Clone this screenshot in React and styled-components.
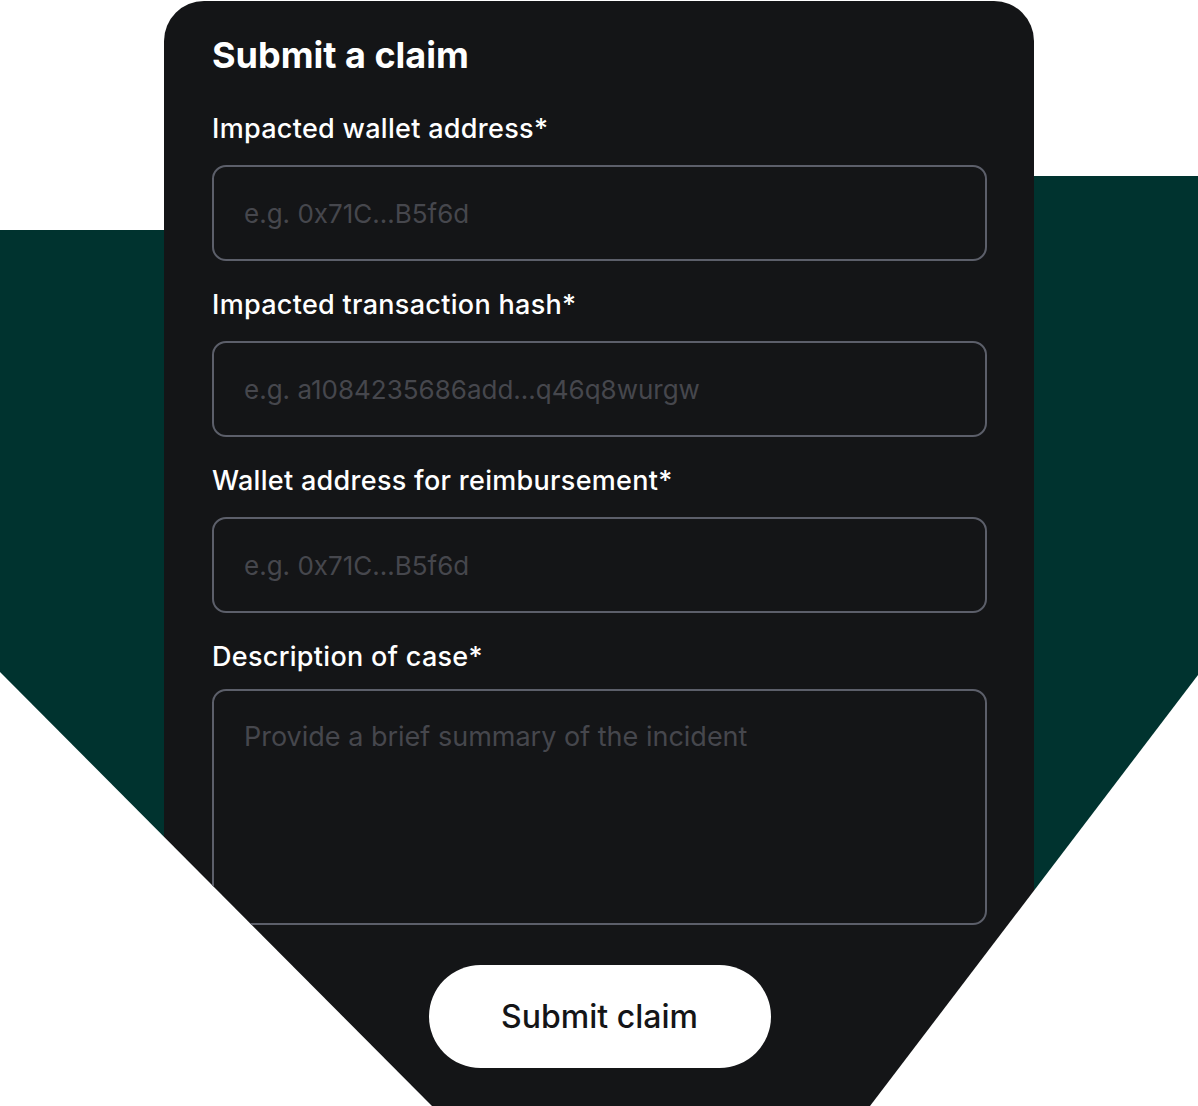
import * as React from "react"
import styled, { createGlobalStyle } from "styled-components"

const GlobalStyle = createGlobalStyle`
  body {
    margin: 0;
    background: #ffffff;
    font-family: Inter, "Liberation Sans", sans-serif;
  }
`

const Scene = styled.div`
  width: 1198px;
  height: 1106px;
  display: grid;
  grid-template-columns: 164px 870px 1fr;
  overflow: hidden;
  clip-path: polygon(0 0, 100% 0, 100% 675px, 870px 1106px, 432px 1106px, 0 672px);
`

const Backdrop = styled.div`
  margin-top: ${props => props.$top}px;
  background: #00332f;
`

const Card = styled.form`
  margin-top: 1px;
  background: #141517;
  border-radius: 40px 40px 0 0;
  padding: 33px 47px 0 48px;
  display: flex;
  flex-direction: column;
`

const Title = styled.h1`
  margin: 0 0 37px;
  font-size: 36px;
  line-height: 42px;
  font-weight: 700;
  color: #ffffff;
`

const Fields = styled.div`
  display: flex;
  flex-direction: column;
  gap: 28px;
`

const Field = styled.label`
  display: flex;
  flex-direction: column;
`

const LabelText = styled.span`
  font-size: 27px;
  line-height: 32px;
  font-weight: 500;
  letter-spacing: 0.3px;
  color: #ffffff;
  margin-bottom: ${props => props.$gap}px;
`

const Input = styled.input`
  box-sizing: border-box;
  height: 96px;
  padding: 0 30px;
  border: 2px solid #5c5f6a;
  border-radius: 14px;
  background: transparent;
  font-family: inherit;
  font-size: 26px;
  color: #ffffff;
  outline: none;

  &::placeholder {
    color: #46474d;
  }
`

const TextArea = styled.textarea`
  box-sizing: border-box;
  height: 236px;
  padding: 30px;
  border: 2px solid #5c5f6a;
  border-radius: 14px;
  background: transparent;
  font-family: inherit;
  font-size: 27px;
  line-height: 32px;
  color: #ffffff;
  resize: none;
  outline: none;

  &::placeholder {
    color: #46474d;
  }
`

const SubmitButton = styled.button`
  align-self: center;
  margin-top: 40px;
  width: 342px;
  height: 103px;
  border: none;
  border-radius: 52px;
  background: #ffffff;
  font-family: inherit;
  font-size: 32px;
  font-weight: 500;
  color: #141517;
  cursor: pointer;
`

const fields = [
  { label: "Impacted wallet address*", placeholder: "e.g. 0x71C...B5f6d" },
  { label: "Impacted transaction hash*", placeholder: "e.g. a1084235686add...q46q8wurgw" },
  { label: "Wallet address for reimbursement*", placeholder: "e.g. 0x71C...B5f6d" },
]

const App = () => (
  <>
    <GlobalStyle />
    <Scene>
      <Backdrop $top={230} />
      <Card onSubmit={e => e.preventDefault()}>
        <Title>Submit a claim</Title>
        <Fields>
          {fields.map(field => (
            <Field key={field.label}>
              <LabelText $gap={20}>{field.label}</LabelText>
              <Input placeholder={field.placeholder} />
            </Field>
          ))}
          <Field>
            <LabelText $gap={16}>Description of case*</LabelText>
            <TextArea placeholder="Provide a brief summary of the incident" />
          </Field>
        </Fields>
        <SubmitButton type="submit">Submit claim</SubmitButton>
      </Card>
      <Backdrop $top={176} />
    </Scene>
  </>
)

export default App
